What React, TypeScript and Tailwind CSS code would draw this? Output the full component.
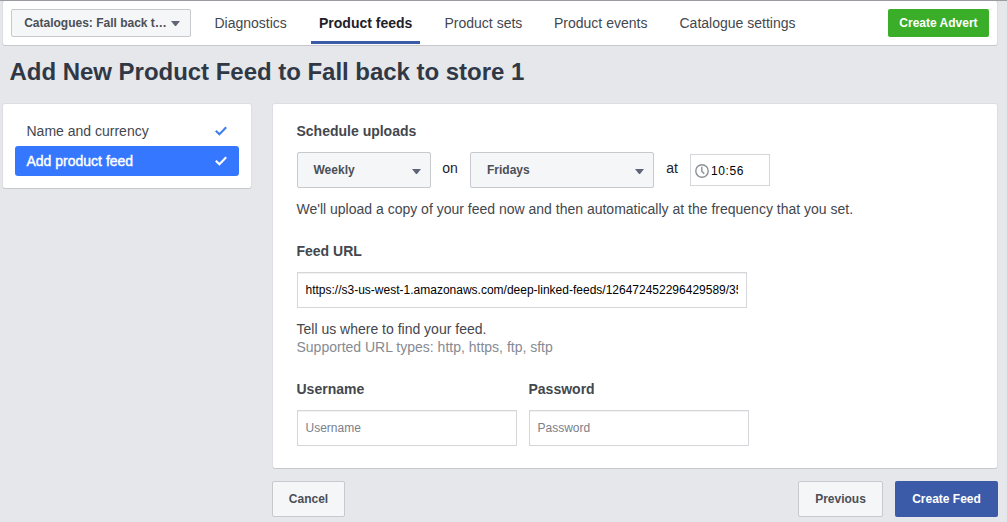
import React from 'react';

function Caret({ className = '' }: { className?: string }) {
  return (
    <svg width="9" height="5" viewBox="0 0 9 5" className={`shrink-0 ${className}`} fill="#5d6577">
      <path d="M0 0h9L5 5H4z" />
    </svg>
  );
}

function Check({ color }: { color: string }) {
  return (
    <svg width="12" height="10" viewBox="0 0 12 10" fill="none" stroke={color} strokeWidth="2.1" className="-mt-px">
      <path d="M0.8 4.8L4.4 8.2L11.2 1.2" />
    </svg>
  );
}

function Clock() {
  return (
    <svg width="14" height="14" viewBox="0 0 14 14" fill="none" stroke="#8d9098" strokeWidth="1.4" className="mt-0.5 shrink-0">
      <circle cx="7" cy="7" r="6.2" />
      <path d="M6.8 2.8V7.2L9.2 9.8" />
    </svg>
  );
}

const card = 'rounded-[2px] bg-white shadow-[0_1px_0_#c6c8cd,0_0_0_1px_#dcdee3]';
const greyButton =
  'flex shrink-0 items-center rounded-[2px] border border-[#c6c9ce] bg-[#f5f6f8] text-[12px] font-bold text-[#4b4f56]';
const field = 'border border-[#d5d6d9] bg-white pl-[7.5px] pr-2 text-[12px] outline-none shadow-[inset_0_1px_0_#f1f1f2]';
const label = 'h-5 text-[14px] leading-5 font-bold text-[#43474e]';

export default function App() {
  return (
    <div className="h-[522px] w-[1007px] overflow-hidden border-t border-[#9b9ba2] bg-[#e6e7eb] font-['Liberation_Sans',Arial,sans-serif] text-[14px] text-[#43474e]">
      <header className={`ml-[3px] flex h-[44px] w-[994px] items-start pt-2 pr-2 pl-2 ${card}`}>
        <button className={`${greyButton} h-7 w-[180px] pl-[12px]`}>
          <span className="w-[143px] whitespace-nowrap">Catalogues: Fall back t…</span>
          <Caret className="ml-[4px]" />
        </button>
        <nav className="flex h-[35px] items-start whitespace-nowrap leading-7">
          <a className="ml-[23px] w-[105px] pl-[0.5px]">Diagnostics</a>
          <a className="mr-6 -ml-2 h-[35px] w-[109px] border-b-[3px] border-[#3b5ba9] pl-2 font-bold text-[#1d2129]">Product feeds</a>
          <a className="w-[110px] pl-[0.5px]">Product sets</a>
          <a className="w-[125px]">Product events</a>
          <a className="pl-[0.5px]">Catalogue settings</a>
        </nav>
        <button className="ml-auto h-7 w-[101px] rounded-[2px] bg-[#3bae29] text-[12px] font-bold text-white">
          Create Advert
        </button>
      </header>

      <h1 className="mt-[11px] ml-[9.5px] h-8 text-[24px] leading-8 font-bold tracking-[-0.03px] text-[#303846]">
        Add New Product Feed to Fall back to store 1
      </h1>

      <div className="mt-[16px] ml-[3px] flex items-start gap-[22px]">
        <aside className={`h-[84px] w-[248px] px-3 pt-3 ${card}`}>
          <div className="flex h-[30px] items-center justify-between pr-3 pl-[11.5px]">
            <span>Name and currency</span>
            <Check color="#4080ee" />
          </div>
          <div className="flex h-[30px] items-center justify-between rounded-[3px] bg-[#3578ff] pr-3 pl-[11.5px] text-white">
            <span className="[-webkit-text-stroke:0.4px_white]">Add product feed</span>
            <Check color="#ffffff" />
          </div>
        </aside>

        <main className={`h-[364px] w-[724px] px-6 pt-[17px] ${card}`}>
          <h2 className={`-ml-[0.5px] ${label}`}>Schedule uploads</h2>
          <div className="mt-[11px] flex h-9 items-start">
            <button className={`${greyButton} h-9 w-[134px] justify-between pr-[9px] pl-[15.5px]`}>
              Weekly <Caret className="mt-0.5" />
            </button>
            <span className="w-[38px] text-center leading-8 text-[#1d2129]">on</span>
            <button className={`${greyButton} ml-px h-9 w-[184px] justify-between pr-[9px] pl-4`}>
              Fridays <Caret className="mt-0.5" />
            </button>
            <span className="w-9 text-center leading-8 text-[#1d2129]">at</span>
            <div className="mt-0.5 flex h-8 w-20 items-center border border-[#d5d6d9] pl-1 text-[12px] text-black">
              <Clock />
              <span className="mt-px ml-[2px] tracking-[0.6px]">10:56</span>
            </div>
          </div>
          <p className="mt-[11px] -ml-[0.5px] h-5 leading-5 whitespace-nowrap">
            We'll upload a copy of your feed now and then automatically at the frequency that you set.
          </p>

          <h2 className={`mt-[22px] -ml-[0.5px] ${label}`}>Feed URL</h2>
          <input
            className={`mt-[11px] block h-9 w-[450px] text-black ${field}`}
            readOnly
            value="https://s3-us-west-1.amazonaws.com/deep-linked-feeds/126472452296429589/3590"
          />
          <p className="mt-[12px] -ml-[0.5px] leading-[18px]">Tell us where to find your feed.</p>
          <p className="-ml-[0.5px] leading-[18px] text-[#868a93]">Supported URL types: http, https, ftp, sftp</p>

          <div className="mt-[23px] flex gap-3">
            <label className="w-[220px]">
              <span className={`-ml-[0.5px] block ${label}`}>Username</span>
              <input className={`mt-[11px] block h-9 w-full placeholder:text-[#7b8089] ${field}`} placeholder="Username" />
            </label>
            <label className="w-[220px]">
              <span className={`-ml-[0.5px] block ${label}`}>Password</span>
              <input className={`mt-[11px] block h-9 w-full placeholder:text-[#7b8089] ${field}`} placeholder="Password" />
            </label>
          </div>
        </main>
      </div>

      <footer className="mt-[13px] ml-[272px] flex w-[726px] gap-3">
        <button className={`${greyButton} mr-auto h-9 w-[73px] justify-center`}>Cancel</button>
        <button className={`${greyButton} h-9 w-[85px] justify-center`}>Previous</button>
        <button className="h-9 w-[103px] rounded-[2px] bg-[#3b5ba9] text-[12px] font-bold text-white">Create Feed</button>
      </footer>
    </div>
  );
}
